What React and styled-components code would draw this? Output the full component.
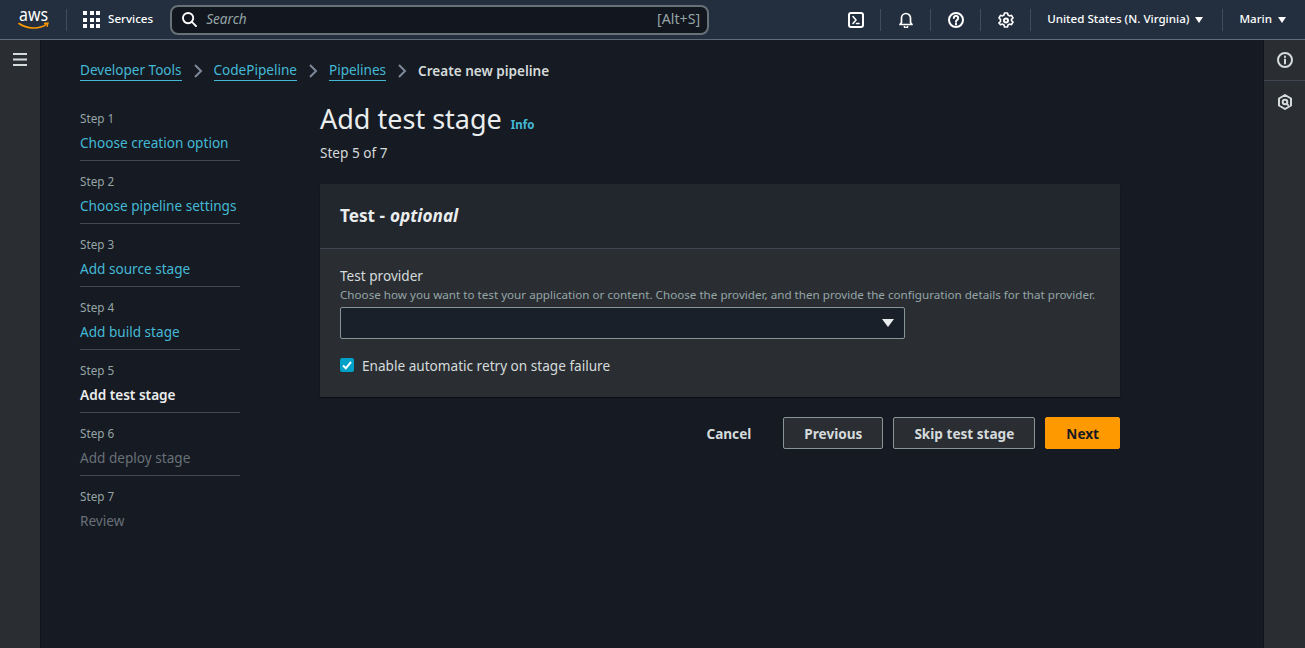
import React from 'react'
import styled, { createGlobalStyle } from 'styled-components'

const GlobalStyle = createGlobalStyle`
  html, body {
    margin: 0;
    padding: 0;
    height: 100%;
    background: #161a22;
    overflow: hidden;
  }
  body {
    font-family: "Noto Sans", "Open Sans", sans-serif;
    font-size: 13.6px;
    color: #d5dbdb;
  }
  * { box-sizing: border-box; }
`

const Page = styled.div`
  width: 1305px;
  height: 648px;
  display: flex;
  flex-direction: column;
`

const TopBar = styled.header`
  height: 40px;
  flex: none;
  display: flex;
  align-items: center;
  background: #232f3e;
  border-bottom: 1px solid #5f6b7a;
  padding-left: 18px;
`

const Logo = styled.svg`
  width: 32px;
  height: 24px;
  flex: none;
  overflow: visible;
`

const Divider = styled.span`
  width: 1px;
  height: 22px;
  flex: none;
  background: #414d5c;
  margin: ${p => p.$margin || '0'};
`

const GridIcon = styled.div`
  display: grid;
  grid-template-columns: repeat(3, 4px);
  grid-auto-rows: 4px;
  gap: 2.5px;
  margin-right: 8px;
  i { background: #fff; display: block; }
`

const BarText = styled.span`
  font-size: 11.6px;
  font-weight: 500;
  color: #fff;
  white-space: nowrap;
  padding-bottom: 2px;
`

const Search = styled.div`
  width: 539px;
  height: 30px;
  margin-left: 17px;
  flex: none;
  display: flex;
  align-items: center;
  background: #12161e;
  border: 2px solid #687078;
  border-radius: 8px;
  padding: 0 7px 0 10px;
  color: #95a5a6;
`

const SearchText = styled.span`
  font-style: italic;
  font-size: 13.6px;
  margin-left: 9px;
  flex: 1;
  padding-bottom: 2px;
`

const Shortcut = styled.span`
  font-size: 14.2px;
  color: #95a5a6;
  padding-bottom: 2px;
`

const BarIcons = styled.div`
  margin-left: auto;
  display: flex;
  align-items: center;
`

const IconSlot = styled.div`
  width: 49px;
  display: flex;
  justify-content: center;
  align-items: center;
`

const Menu = styled.div`
  display: flex;
  align-items: center;
  gap: 6px;
  margin: ${p => p.$margin || '0'};
`

const Caret = styled.span`
  width: 0;
  height: 0;
  border-left: ${p => p.$size || 5}px solid transparent;
  border-right: ${p => p.$size || 5}px solid transparent;
  border-top: ${p => (p.$size || 5) + 2}px solid ${p => p.$color || '#fff'};
`

const Body = styled.div`
  flex: 1;
  display: flex;
  min-height: 0;
`

const Rail = styled.aside`
  width: ${p => p.$width}px;
  flex: none;
  background: #2a2e33;
  display: flex;
  flex-direction: column;
  align-items: center;
  ${p => p.$right ? 'border-left: 1px solid #11151b;' : 'border-right: 1px solid #11151b;'}
`

const RailItem = styled.div`
  width: 100%;
  height: 41px;
  display: flex;
  align-items: center;
  justify-content: center;
  ${p => p.$line && 'border-bottom: 1px solid #414750;'}
`

const Hamburger = styled.svg`
  width: 14px;
  height: 13px;
  margin-bottom: 2px;
`

const Main = styled.main`
  flex: 1;
  padding: 19px 39px 0;
  min-width: 0;
`

const Crumbs = styled.nav`
  display: flex;
  align-items: center;
  height: 24px;
  margin-bottom: 15px;
  font-size: 13.55px;
`

const CrumbLink = styled.a`
  color: #44b9d6;
  text-decoration: none;
  border-bottom: 1px solid #44b9d6;
  line-height: 19px;
  white-space: nowrap;
`

const CrumbCurrent = styled.span`
  font-weight: 600;
  color: #d5dbdb;
  white-space: nowrap;
`

const CrumbSep = styled.svg`
  width: 10px;
  height: 14px;
  margin: 0 11px;
  flex: none;
`

const Layout = styled.div`
  display: flex;
  align-items: flex-start;
`

const Steps = styled.ol`
  list-style: none;
  margin: 0;
  padding: 0;
  width: 160px;
  flex: none;
  margin-right: 80px;
`

const StepItem = styled.li`
  height: 63px;
  padding-top: 12px;
  ${p => !p.$last && 'border-bottom: 1px solid #414750;'}
`

const StepLabel = styled.div`
  font-size: 11.7px;
  line-height: 16px;
  color: #95a5a6;
`

const StepName = styled.div`
  line-height: 20px;
  margin-top: 7px;
  white-space: nowrap;
  color: ${p => p.$state === 'done' ? '#44b9d6' : p.$state === 'current' ? '#eaeded' : '#687078'};
  font-weight: ${p => p.$state === 'current' ? 600 : 400};
`

const Content = styled.section`
  width: 800px;
  flex: none;
  padding-top: 3px;
`

const TitleRow = styled.div`
  display: flex;
  align-items: baseline;
  gap: 9px;
`

const Title = styled.h1`
  margin: 0;
  font-size: 27px;
  font-weight: 400;
  line-height: 36px;
  color: #eaeded;
`

const InfoLink = styled.a`
  font-size: 11.5px;
  font-weight: 700;
  color: #44b9d6;
`

const Subtitle = styled.div`
  line-height: 20px;
  margin-top: 6px;
  color: #d5dbdb;
`

const Card = styled.div`
  margin-top: 21px;
  background: #2a2e33;
  box-shadow: 0 1px 1px rgba(0, 0, 0, 0.5);
`

const CardHead = styled.div`
  height: 65px;
  padding: 0 0 2px 20px;
  background: #22262d;
  border-bottom: 1px solid #414750;
  display: flex;
  align-items: center;
  font-size: 17.2px;
  font-weight: 700;
  color: #eaeded;
  em { margin-left: 5px; }
`

const CardBody = styled.div`
  padding: 16px 20px 22px;
`

const FieldLabel = styled.label`
  display: block;
  line-height: 22px;
  color: #d5dbdb;
`

const FieldHint = styled.div`
  font-size: 11.65px;
  line-height: 16px;
  color: #95a5a6;
  white-space: nowrap;
`

const Select = styled.div`
  width: 565px;
  height: 32px;
  margin-top: 4px;
  background: #1a2029;
  border: 1px solid #879596;
  border-radius: 2px;
  display: flex;
  align-items: center;
  justify-content: flex-end;
  padding-right: 10px;
`

const CheckRow = styled.div`
  display: flex;
  align-items: center;
  gap: 8px;
  margin-top: 16px;
  height: 20px;
`

const CheckBox = styled.span`
  width: 14px;
  height: 14px;
  border-radius: 2px;
  background: #00a1c9;
  display: flex;
  align-items: center;
  justify-content: center;
`

const Actions = styled.div`
  margin-top: 20px;
  display: flex;
  justify-content: flex-end;
  align-items: center;
  gap: 10px;
`

const Button = styled.button`
  height: 32px;
  padding: 0 ${p => p.$variant === 'text' ? 21 : 20}px;
  border-radius: 2px;
  font: 700 13.6px "Noto Sans", "Open Sans", sans-serif;
  white-space: nowrap;
  color: ${p => p.$variant === 'primary' ? '#161a22' : '#d5dbdb'};
  background: ${p => p.$variant === 'primary' ? '#ff9900' : p.$variant === 'text' ? 'transparent' : '#2a2e33'};
  border: 1px solid ${p => p.$variant === 'primary' ? '#ff9900' : p.$variant === 'text' ? 'transparent' : '#879596'};
`

const stroke = { fill: 'none', stroke: '#fff', strokeWidth: 2, strokeLinecap: 'round', strokeLinejoin: 'round' }
const railStroke = { ...stroke, stroke: '#d5dbdb' }

const steps = [
  ['Step 1', 'Choose creation option', 'done'],
  ['Step 2', 'Choose pipeline settings', 'done'],
  ['Step 3', 'Add source stage', 'done'],
  ['Step 4', 'Add build stage', 'done'],
  ['Step 5', 'Add test stage', 'current'],
  ['Step 6', 'Add deploy stage', 'todo'],
  ['Step 7', 'Review', 'todo'],
]

const Sep = () => (
  <CrumbSep viewBox="0 0 10 14">
    <path d="M2 1l6 6-6 6" fill="none" stroke="#7d8998" strokeWidth="2" />
  </CrumbSep>
)

const App = () => {
  return (
    <Page>
      <GlobalStyle />
      <TopBar>
        <Logo viewBox="0 0 32 24">
          <text x="1" y="13" fontSize="18" fill="#fff" fontFamily="Noto Sans, sans-serif" textLength="29" lengthAdjust="spacingAndGlyphs">aws</text>
          <path d="M1 15.5c8 5.5 20 6 27 1.2" fill="none" stroke="#ff9900" strokeWidth="1.6" strokeLinecap="round" />
          <path d="M26 15.5l4-.5-1 3.800" fill="none" stroke="#ff9900" strokeWidth="1.3" />
        </Logo>
        <Divider $margin="0 16px 0 16px" />
        <GridIcon>
          {Array.from({ length: 9 }).map((_, i) => <i key={i} />)}
        </GridIcon>
        <BarText>Services</BarText>
        <Search>
          <svg width="15" height="15" viewBox="0 0 16 16" {...stroke}>
            <circle cx="6.5" cy="6.5" r="5.5" />
            <path d="M10.5 10.5l4.5 4.5" />
          </svg>
          <SearchText>Search</SearchText>
          <Shortcut>[Alt+S]</Shortcut>
        </Search>
        <BarIcons>
          <IconSlot>
            <svg width="16" height="16" viewBox="0 0 16 16" {...stroke}>
              <rect x="1" y="1" width="14" height="14" rx="2" />
              <path d="M5 4.5l3 3.500-3 3.500M8.500 11.500h2.500" strokeWidth="1.6" />
            </svg>
          </IconSlot>
          <Divider />
          <IconSlot>
            <svg width="16" height="16" viewBox="0 0 16 16" {...stroke} strokeWidth="1.7">
              <path d="M2 12.5h12l-1.500-2V6a4.500 4.500 0 0 0-9 0v4.500z" />
              <path d="M6.5 14.5a1.500 1.500 0 0 0 3 0" />
            </svg>
          </IconSlot>
          <Divider />
          <IconSlot>
            <svg width="16" height="16" viewBox="0 0 16 16" {...stroke}>
              <circle cx="8" cy="8" r="7" />
              <path d="M5.8 6a2.200 2.200 0 1 1 3.400 1.900C8.400 8.400 8 9 8 9.800" />
              <path d="M8 11.5v1" />
            </svg>
          </IconSlot>
          <Divider />
          <IconSlot>
            <svg width="16" height="16" viewBox="0 0 16 16" {...stroke}>
              <path d="M6.5 1h3l.5 2 1.500.9 2-.6 1.500 2.700-1.500 1.400v1.200l1.500 1.400-1.500 2.700-2-.6-1.500.9-.5 2h-3l-.5-2-1.500-.9-2 .6L1 10.900l1.500-1.400V7.400L1 6l1.500-2.700 2 .6L6 3z" strokeWidth="1.6" />
              <circle cx="8" cy="8.5" r="2" />
            </svg>
          </IconSlot>
          <Divider />
          <Menu $margin="0 0 0 16px">
            <BarText>United States (N. Virginia)</BarText>
            <Caret $size={4} />
          </Menu>
          <Divider $margin="0 16px 0 19px" />
          <Menu $margin="0 19px 0 0">
            <BarText>Marin</BarText>
            <Caret $size={4} />
          </Menu>
        </BarIcons>
      </TopBar>
      <Body>
        <Rail $width={41}>
          <RailItem>
            <Hamburger viewBox="0 0 14 13">
              <path d="M0 1h14M0 6.5h14M0 12h14" stroke="#d5dbdb" strokeWidth="2" />
            </Hamburger>
          </RailItem>
        </Rail>
        <Main>
          <Crumbs>
            <CrumbLink>Developer Tools</CrumbLink>
            <Sep />
            <CrumbLink>CodePipeline</CrumbLink>
            <Sep />
            <CrumbLink>Pipelines</CrumbLink>
            <Sep />
            <CrumbCurrent>Create new pipeline</CrumbCurrent>
          </Crumbs>
          <Layout>
            <Steps>
              {steps.map(([label, name, state], i) => (
                <StepItem key={label} $last={i === steps.length - 1}>
                  <StepLabel>{label}</StepLabel>
                  <StepName $state={state}>{name}</StepName>
                </StepItem>
              ))}
            </Steps>
            <Content>
              <TitleRow>
                <Title>Add test stage</Title>
                <InfoLink>Info</InfoLink>
              </TitleRow>
              <Subtitle>Step 5 of 7</Subtitle>
              <Card>
                <CardHead>Test -<em>optional</em></CardHead>
                <CardBody>
                  <FieldLabel>Test provider</FieldLabel>
                  <FieldHint>Choose how you want to test your application or content. Choose the provider, and then provide the configuration details for that provider.</FieldHint>
                  <Select><Caret $size={6} $color="#eaeded" /></Select>
                  <CheckRow>
                    <CheckBox>
                      <svg width="10" height="10" viewBox="0 0 10 10">
                        <path d="M1 5.5l2.800 2.800L9 2" fill="none" stroke="#fff" strokeWidth="2" />
                      </svg>
                    </CheckBox>
                    Enable automatic retry on stage failure
                  </CheckRow>
                </CardBody>
              </Card>
              <Actions>
                <Button $variant="text">Cancel</Button>
                <Button>Previous</Button>
                <Button>Skip test stage</Button>
                <Button $variant="primary">Next</Button>
              </Actions>
            </Content>
          </Layout>
        </Main>
        <Rail $width={42} $right>
          <RailItem $line>
            <svg width="16" height="16" viewBox="0 0 16 16" {...railStroke}>
              <circle cx="8" cy="8" r="7" />
              <path d="M8 7.5v4M8 4.5v.5" />
            </svg>
          </RailItem>
          <RailItem>
            <svg width="16" height="16" viewBox="0 0 16 16" {...railStroke}>
              <path d="M8 1l6 3.500v7L8 15l-6-3.500v-7z" />
              <circle cx="8" cy="8" r="2.3" />
              <path d="M9.5 9.5l1.500 1.500" />
            </svg>
          </RailItem>
        </Rail>
      </Body>
    </Page>
  )
}

export default App
